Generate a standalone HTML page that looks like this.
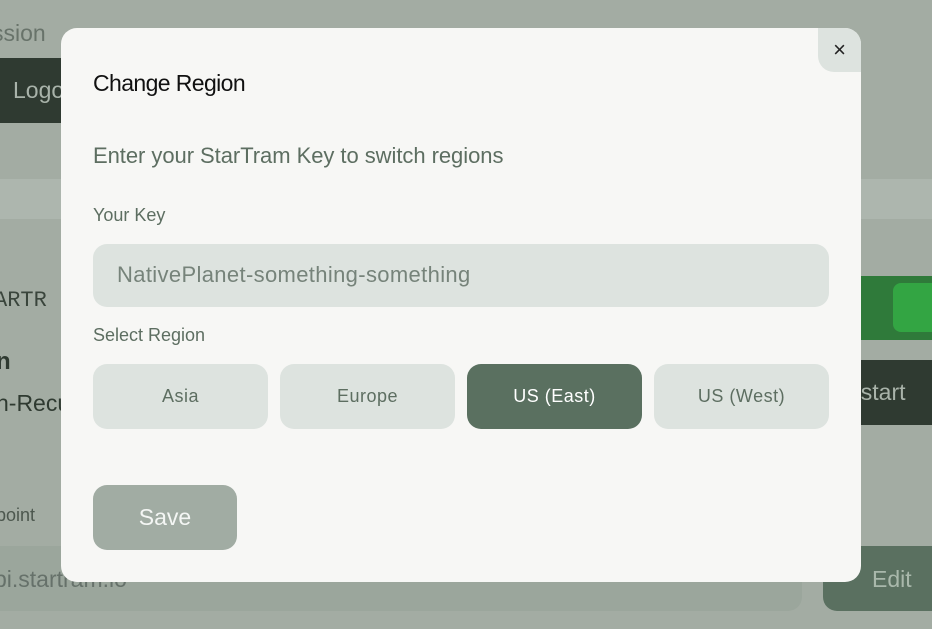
<!DOCTYPE html>
<html><head><style>
*{margin:0;padding:0;box-sizing:border-box}
body{width:932px;height:629px;overflow:hidden;background:#a3aca3;font-family:"Liberation Sans",sans-serif;position:relative}
.a{position:absolute}
</style></head><body>
<div class="a" style="left:0;top:20px;font-size:23px;color:#68736a;left:-8px">ssion</div>
<div class="a" style="left:0;top:58px;width:80px;height:65px;background:#2f3a31;color:#a9b3aa;font-size:23px;padding:19px 0 0 13px">Logo</div>
<div class="a" style="left:0;top:179px;width:932px;height:40px;background:#adb6ae"></div>
<div class="a" style="left:-6px;top:288px;font-size:22px;color:#3a453c;font-family:'Liberation Mono',monospace;letter-spacing:0px">ARTR</div>
<div class="a" style="left:-4px;top:348px;font-size:24px;color:#2f3a31;font-weight:bold">n</div>
<div class="a" style="left:-4px;top:390px;font-size:23px;color:#2f3a31">n-Recu</div>
<div class="a" style="left:-4px;top:505px;font-size:18px;color:#4c574e">point</div>
<div class="a" style="left:0;top:546px;width:802px;height:65px;background:#9ba69c;border-radius:0 14px 14px 0;font-size:23px;color:#66716a;padding:20px 0 0 0;text-indent:-6px">pi.startram.io</div>
<div class="a" style="left:800px;top:276px;width:132px;height:64px;background:#2f7a3a;color:#a9c2ab;font-size:23px;padding:18px 0 0 45px">n</div>
<div class="a" style="left:893px;top:283px;width:60px;height:49px;background:#33a543;border-radius:8px"></div>
<div class="a" style="left:800px;top:360px;width:132px;height:65px;background:#2f3a31;color:#a9b3aa;font-size:23px;padding:19px 0 0 48px">estart</div>
<div class="a" style="left:823px;top:546px;width:130px;height:65px;background:#5a7060;border-radius:14px;color:#a9b8ab;font-size:23px;padding:20px 0 0 49px">Edit</div>

<div class="a" style="left:61px;top:28px;width:800px;height:554px;background:#f7f7f5;border-radius:16px">
 <div class="a" style="right:0;top:0;width:43px;height:44px;background:#dde3df;border-radius:0 16px 0 16px;text-align:center;line-height:44px;font-size:22px;color:#222">×</div>
 <div class="a" style="left:32px;top:42px;font-size:23px;color:#111;letter-spacing:-0.6px">Change Region</div>
 <div class="a" style="left:32px;top:115px;font-size:22px;color:#5d6e61;letter-spacing:-0.05px">Enter your StarTram Key to switch regions</div>
 <div class="a" style="left:32px;top:177px;font-size:18px;color:#5d6e61">Your Key</div>
 <div class="a" style="left:32px;top:216px;width:736px;height:63px;background:#dde3df;border-radius:14px;font-size:22px;color:#76837a;padding:18px 0 0 24px;letter-spacing:0.35px">NativePlanet-something-something</div>
 <div class="a" style="left:32px;top:297px;font-size:18px;color:#5d6e61">Select Region</div>
 <div class="a" style="left:32px;top:336px;width:175px;height:65px;background:#dde3df;border-radius:14px;text-align:center;line-height:65px;font-size:18px;color:#5d6e61;letter-spacing:0.5px">Asia</div>
 <div class="a" style="left:219px;top:336px;width:175px;height:65px;background:#dde3df;border-radius:14px;text-align:center;line-height:65px;font-size:18px;color:#5d6e61;letter-spacing:0.5px">Europe</div>
 <div class="a" style="left:406px;top:336px;width:175px;height:65px;background:#5a7060;border-radius:14px;text-align:center;line-height:65px;font-size:18px;color:#fff;letter-spacing:0.5px">US (East)</div>
 <div class="a" style="left:593px;top:336px;width:175px;height:65px;background:#dde3df;border-radius:14px;text-align:center;line-height:65px;font-size:18px;color:#5d6e61;letter-spacing:0.5px">US (West)</div>
 <div class="a" style="left:32px;top:457px;width:144px;height:65px;background:#a1aca3;border-radius:14px;text-align:center;line-height:65px;font-size:23px;color:#f4f6f4">Save</div>
</div>
</body></html>
